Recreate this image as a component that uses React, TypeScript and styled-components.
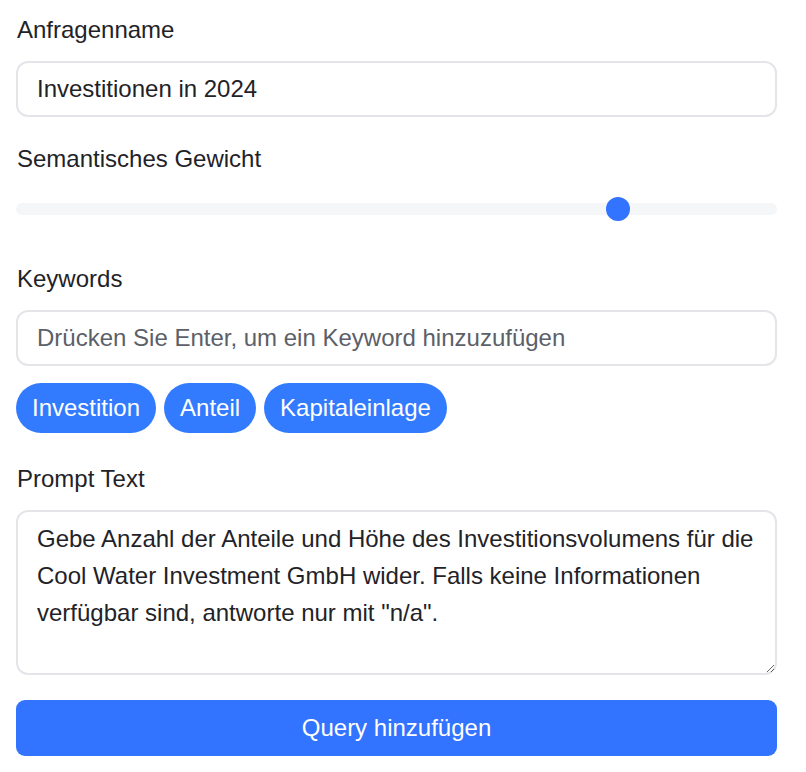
import React from "react";
import styled, { createGlobalStyle } from "styled-components";

const Global = createGlobalStyle`
  html, body { margin: 0; padding: 0; background: #ffffff; }
  body { font-family: "Liberation Sans", Arial, sans-serif; color: #1f2328; }
  * { box-sizing: border-box; }
`;

const Form = styled.form`
  width: 761px;
  margin-left: 16px;
  padding-top: 12px;
  display: flex;
  flex-direction: column;
`;

const Label = styled.label<{ $gap?: number }>`
  display: block;
  font-size: 24px;
  line-height: 36px;
  color: #1f2328;
  margin-left: 1px;
  margin-bottom: ${(p) => p.$gap ?? 13}px;
`;

const Field = styled.div<{ $mb: number }>`
  display: flex;
  flex-direction: column;
  margin-bottom: ${(p) => p.$mb}px;
`;

const TextInput = styled.input`
  width: 100%;
  height: 56px;
  border: 2px solid #e3e5e9;
  border-radius: 12px;
  padding: 0 19px;
  font-family: inherit;
  font-size: 24px;
  color: #1f2328;
  background: #fff;
  outline: none;
  &::placeholder { color: #5c6068; }
`;

const Range = styled.input`
  -webkit-appearance: none;
  appearance: none;
  width: 100%;
  height: 24px;
  margin: 0;
  background: transparent;
  &::-webkit-slider-runnable-track {
    height: 12px;
    border-radius: 6px;
    background: #f5f6f8;
  }
  &::-webkit-slider-thumb {
    -webkit-appearance: none;
    width: 24px;
    height: 24px;
    border-radius: 50%;
    background: #3273ff;
    border: none;
    margin-top: -6px;
  }
`;

const ChipRow = styled.div`
  display: flex;
  gap: 8px;
  margin-top: 17px;
`;

const Chip = styled.span`
  display: inline-flex;
  align-items: center;
  height: 50px;
  padding: 0 16px;
  border-radius: 25px;
  background: #327bff;
  color: #ffffff;
  font-size: 24px;
`;

const TextArea = styled.textarea`
  width: 100%;
  height: 165px;
  border: 2px solid #e3e5e9;
  border-radius: 12px;
  padding: 8px 19px;
  font-family: inherit;
  font-size: 24px;
  line-height: 37px;
  color: #1f2328;
  resize: vertical;
  outline: none;
`;

const SubmitButton = styled.button`
  width: 100%;
  height: 56px;
  border: none;
  border-radius: 9px;
  background: #3273ff;
  color: #ffffff;
  font-family: inherit;
  font-size: 24px;
  cursor: pointer;
`;

export default function App() {
  return (
    <>
      <Global />
      <Form onSubmit={(e) => e.preventDefault()}>
        <Field $mb={24}>
          <Label htmlFor="name">Anfragenname</Label>
          <TextInput id="name" defaultValue="Investitionen in 2024" />
        </Field>
        <Field $mb={40}>
          <Label htmlFor="weight" $gap={20}>Semantisches Gewicht</Label>
          <Range id="weight" type="range" min={0} max={1} step={0.1} defaultValue={0.8} />
        </Field>
        <Field $mb={28}>
          <Label htmlFor="kw">Keywords</Label>
          <TextInput id="kw" placeholder="Drücken Sie Enter, um ein Keyword hinzuzufügen" />
          <ChipRow>
            <Chip>Investition</Chip>
            <Chip>Anteil</Chip>
            <Chip>Kapitaleinlage</Chip>
          </ChipRow>
        </Field>
        <Field $mb={25}>
          <Label htmlFor="prompt">Prompt Text</Label>
          <TextArea
            id="prompt"
            defaultValue={'Gebe Anzahl der Anteile und Höhe des Investitionsvolumens für die Cool Water Investment GmbH wider. Falls keine Informationen verfügbar sind, antworte nur mit "n/a".'}
          />
        </Field>
        <SubmitButton type="submit">Query hinzufügen</SubmitButton>
      </Form>
    </>
  );
}
